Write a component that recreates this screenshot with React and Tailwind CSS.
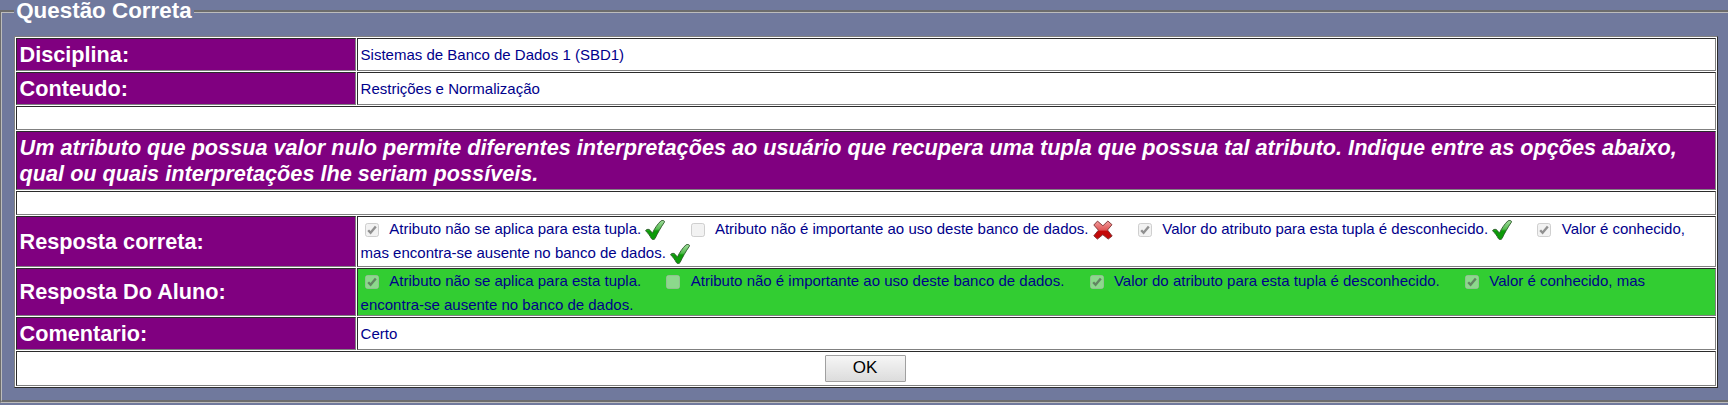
import React from "react";

const Tick = () => (
  <svg className="mt-[2.500px] inline-block align-top" width="20" height="20" viewBox="1 1 20 20">
    <defs>
      <linearGradient id="tick" x1="0" y1="0" x2="0" y2="1">
        <stop offset="0" stopColor="#a5dca0" />
        <stop offset="0.45" stopColor="#55bd50" />
        <stop offset="0.55" stopColor="#0c9c08" />
        <stop offset="1" stopColor="#0a9a08" />
      </linearGradient>
    </defs>
    <path d="M1.500 11.600C2.800 9.800 5.400 9.900 6.400 11.600L8.400 14.200C10.400 9.800 13.200 5.400 16.800 2C18.200 0.900 21 1.300 20.400 3.200C16.900 8.200 13.400 14.500 11 19.600C10.200 21 8.200 20.900 7.400 19.600C6 16.800 4 14.200 1.500 11.600Z" fill="url(#tick)" stroke="#2c5a2a" strokeWidth="0.9" />
  </svg>
);

const Cross = () => (
  <svg className="mt-[2.500px] inline-block align-top" width="20" height="20" viewBox="1 1 20 20">
    <defs>
      <linearGradient id="cross" x1="0" y1="0" x2="0" y2="1">
        <stop offset="0" stopColor="#f2a0a0" />
        <stop offset="0.5" stopColor="#e05555" />
        <stop offset="0.56" stopColor="#c40808" />
        <stop offset="1" stopColor="#c00808" />
      </linearGradient>
    </defs>
    <path d="M5.500 2.100L10.900 6.800L15.900 2L20 5.700L15.500 11L20.200 17L16.200 20.100L10.800 15.700L5.400 20.100L1.800 16.800L6.400 11.200L1.800 6Z" fill="url(#cross)" stroke="#7c3030" strokeWidth="0.9" strokeLinejoin="round" />
  </svg>
);

const Box = ({ checked }) => (
  <svg className="ml-[4.400px] mr-[2px] inline-block align-[-3px]" width="14" height="14" viewBox="0 0 14 14">
    <rect x="0.500" y="0.500" width="13" height="13" rx="2" fill="#e6e6e6" fillOpacity="0.5" stroke="#b4b4b4" strokeOpacity="0.6" />
    {checked && <path d="M3.200 7.200L5.600 9.800L10.800 3.600" fill="none" stroke="#404040" strokeOpacity="0.55" strokeWidth="2.400" />}
  </svg>
);

const cell = "border border-t-[#2b2b2b] border-l-[#2b2b2b] border-b-[#808080] border-r-[#808080] px-[2.600px] py-0 align-middle";
const label = "w-[340px] bg-[#800080] text-[21.660px] leading-[26px] font-bold text-white";

const Field = ({ name, height, children, tone = "bg-white" }) => (
  <tr className={height}>
    <th className={`${cell} ${label} text-left`}>{name}</th>
    <td className={`${cell} ${tone}`}>{children}</td>
  </tr>
);

const Spacer = () => (
  <tr className="h-[24px]">
    <td colSpan={2} className={`${cell} bg-white`} />
  </tr>
);

const G = "\u00a0\u00a0";

export default function App() {
  return (
    <div className="h-[405px] overflow-hidden bg-[#70799d] font-['Liberation_Sans',sans-serif] text-[15px] leading-[24px] text-[#00008b]">
      <div className="flex h-[24px] w-full items-start">
        <div className="mt-[10px] h-[14px] w-[14px] shrink-0 border-t-2 border-l border-[#6c6c6c]">
          <div className="h-[12px] border-t border-l border-[#bcbcbc]" />
        </div>
        <h1 className="px-[2.200px] text-[22.400px] leading-[22px] font-bold text-white">Questão Correta</h1>
        <div className="mt-[10px] h-[3px] flex-1 border-t-2 border-b border-t-[#6c6c6c] border-b-[#bcbcbc]" />
      </div>
      <div className="h-[379px] border-b border-l border-b-[#bcbcbc] border-l-[#6c6c6c]">
        <div className="h-[378px] border-b-2 border-l border-b-[#6c6c6c] border-l-[#bcbcbc] pt-[12px] pl-[12px]">
          <table className="w-[1704px] table-fixed border-separate border-spacing-[1px] border border-t-[#808080] border-l-[#808080] border-b-[#2b2b2b] border-r-[#2b2b2b] bg-white">
            <colgroup>
              <col className="w-[340px]" />
              <col />
            </colgroup>
            <tbody>
              <Field name="Disciplina:" height="h-[33px]">Sistemas de Banco de Dados 1 (SBD1)</Field>
              <Field name="Conteudo:" height="h-[33px]">Restrições e Normalização</Field>
              <Spacer />
              <tr className="h-[59px]">
                <td colSpan={2} className={`${cell} bg-[#800080] text-[21.660px] leading-[26px] font-bold text-white italic`}>
                  Um atributo que possua valor nulo permite diferentes interpretações ao usuário que recupera uma tupla que possua tal atributo. Indique entre as opções abaixo,
                  <br />
                  qual ou quais interpretações lhe seriam possíveis.
                </td>
              </tr>
              <Spacer />
              <Field name="Resposta correta:" height="h-[51px]">
                <div className="-mt-[1px] h-[48px] whitespace-nowrap">
                  <Box checked />{G}Atributo não se aplica para esta tupla. <Tick />{G}{G} <Box />{G}Atributo não é importante ao uso deste banco de dados. <Cross />{G}{G} <Box checked />{G}Valor do atributo para esta tupla é desconhecido. <Tick />{G}{G} <Box checked />{G}Valor é conhecido,
                  <br />
                  mas encontra-se ausente no banco de dados. <Tick />
                </div>
              </Field>
              <Field name="Resposta Do Aluno:" height="h-[48px]" tone="bg-[#32cd32]">
                <div className="h-[46px] whitespace-nowrap">
                  <Box checked />{G}Atributo não se aplica para esta tupla.{G}{G} <Box />{G}Atributo não é importante ao uso deste banco de dados.{G}{G} <Box checked />{G}Valor do atributo para esta tupla é desconhecido.{G}{G} <Box checked />{G}Valor é conhecido, mas
                  <br />
                  encontra-se ausente no banco de dados.
                </div>
              </Field>
              <Field name="Comentario:" height="h-[33px]">Certo</Field>
              <tr className="h-[35px]">
                <td colSpan={2} className={`${cell} bg-white`}>
                  <div className="flex justify-center pr-[2px]">
                    <button className="h-[27px] w-[81px] rounded-[1px] border border-[#a0a0a0] bg-linear-to-b from-[#f6f6f6] to-[#dcdcdc] pb-[2px] text-[17px] leading-[22px] text-black">OK</button>
                  </div>
                </td>
              </tr>
            </tbody>
          </table>
        </div>
      </div>
    </div>
  );
}
